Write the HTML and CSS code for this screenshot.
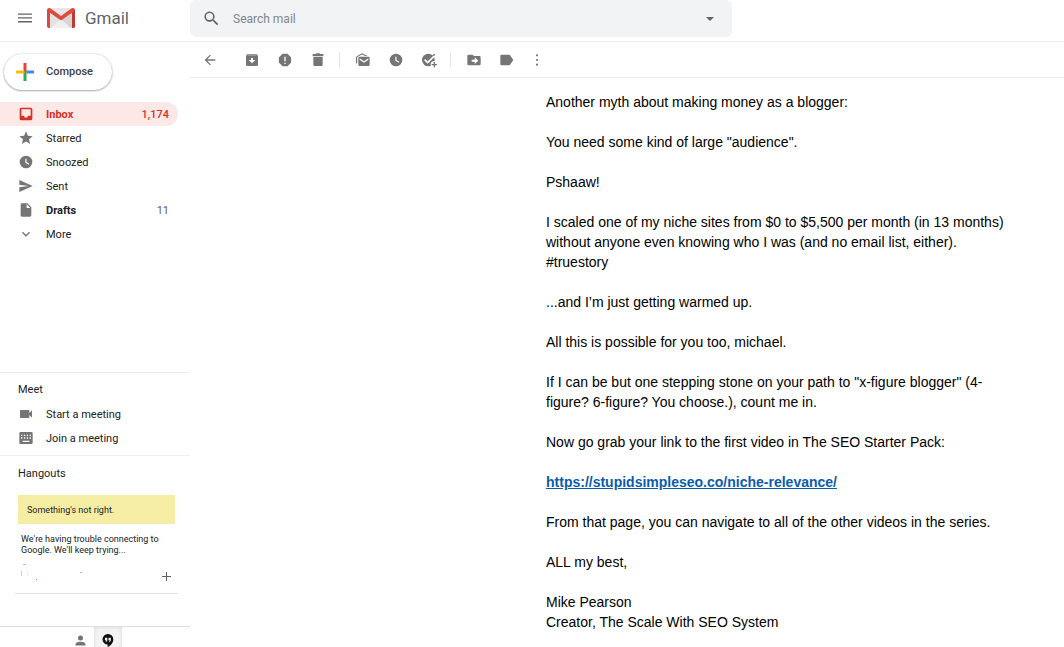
FILE: index.html
```html
<!DOCTYPE html>
<html lang="en">
<head>
<meta charset="utf-8">
<meta name="viewport" content="width=device-width, initial-scale=1">
<title>Gmail</title>
<link rel="stylesheet" href="styles.css">
</head>
<body>
<header class="topbar">
  <div class="brand">
    <button class="icon-btn menu" aria-label="Main menu"><svg width="14" height="10" viewBox="0 0 14 10"><path d="M0 .5h14v1.3H0zM0 4.3h14v1.3H0zM0 8.1h14v1.3H0z"/></svg></button>
    <a class="logo" href="#">
      <svg width="28" height="20" viewBox="0 0 28 20" aria-hidden="true">
        <rect x="1" y="0" width="26" height="20" rx="2" fill="#e2e2e2"/>
        <path d="M4 20 14 11l10 9z" fill="#f0f0f0"/>
        <path d="M14 11 25 3v17h-1z" fill="#d6d6d6"/>
        <path d="M2 0h24L14 9z" fill="#e6e6e6"/>
        <path d="M0 2.200C0 .8 1 0 2 0c.8 0 1.300.2 2 .7L14 8 24 .7c.7-.5 1.200-.7 2-.7 1 0 2 .8 2 2.200V18c0 1.200-.8 2-2 2h-1V4.700L14 12.500 3 4.700V20H2c-1.200 0-2-.8-2-2z" fill="#dc4a3e"/>
        <path d="M25 4.700 28 2.500V18c0 1.200-.8 2-2 2h-1z" fill="#c5372c"/>
      </svg>
      <span>Gmail</span>
    </a>
  </div>
  <form class="search" role="search">
    <button class="icon-btn" type="button" aria-label="Search"><svg width="19" height="19" viewBox="0 0 24 24"><path d="M15.500 14h-.79l-.28-.27A6.470 6.470 0 0 0 16 9.500 6.500 6.500 0 1 0 9.500 16c1.610 0 3.090-.59 4.230-1.570l.27.28v.79l5 4.990L20.490 19zm-6 0a4.500 4.500 0 1 1 0-9 4.500 4.500 0 0 1 0 9z"/></svg></button>
    <input type="text" placeholder="Search mail" aria-label="Search mail">
    <button class="icon-btn" type="button" aria-label="Search options"><svg width="8" height="4" viewBox="0 0 8 4"><path d="M0 0h8L4 4z"/></svg></button>
  </form>
</header>
<div class="layout">
  <aside class="sidebar">
    <button class="compose">
      <svg width="18" height="18" viewBox="0 0 18 18" aria-hidden="true"><path d="M7.500 0h3v9h-3z" fill="#ea4335"/><path d="M0 7.500h7.500L10.500 10.500H0z" fill="#fbbc04"/><path d="M10.500 7.500H18v3h-7.500z" fill="#4285f4"/><path d="M7.500 10.500l3-3V18h-3z" fill="#34a853"/></svg>
      <span>Compose</span>
    </button>
    <nav class="nav">
      <a class="row active" href="#"><svg class="ico" viewBox="0 0 24 24"><path fill-rule="evenodd" d="M19 2.500H5A2.500 2.500 0 0 0 2.500 5v14A2.500 2.500 0 0 0 5 21.500h14a2.500 2.500 0 0 0 2.500-2.500V5A2.500 2.500 0 0 0 19 2.500zM19 14.500h-4a3 3 0 0 1-6 0H5V5h14z"/></svg><span>Inbox</span><span class="count">1,174</span></a>
      <a class="row" href="#"><svg class="ico" viewBox="0 0 24 24"><path d="M12 17.270 18.180 21l-1.640-7.030L22 9.240l-7.190-.61L12 2 9.190 8.630 2 9.240l5.460 4.730L5.820 21z"/></svg><span>Starred</span></a>
      <a class="row" href="#"><svg class="ico" viewBox="0 0 24 24"><path fill-rule="evenodd" d="M12 2.500a9.500 9.500 0 1 0 0 19 9.500 9.500 0 0 0 0-19zM11 7h1.800v5l4.200 2.500-.9 1.600L11 13z"/></svg><span>Snoozed</span></a>
      <a class="row" href="#"><svg class="ico" viewBox="0 0 24 24"><path d="M2 21 22 12 2 3v7l14 2-14 2z"/></svg><span>Sent</span></a>
      <a class="row bold" href="#"><svg class="ico" viewBox="0 0 24 24"><path fill-rule="evenodd" d="M6 2a2 2 0 0 0-2 2v16a2 2 0 0 0 2 2h12a2 2 0 0 0 2-2V8l-6-6zm7 7V3.500L18.500 9z"/></svg><span>Drafts</span><span class="count">11</span></a>
      <a class="row" href="#"><svg class="ico" viewBox="0 0 24 24"><path d="M16.600 8.600 12 13.200 7.400 8.600 6 10l6 6 6-6z"/></svg><span>More</span></a>
    </nav>
    <section class="meet">
      <h2>Meet</h2>
      <a class="row" href="#"><svg class="ico" viewBox="0 0 24 24"><path d="M17 10.500V7a1 1 0 0 0-1-1H4a1 1 0 0 0-1 1v10a1 1 0 0 0 1 1h12a1 1 0 0 0 1-1v-3.500l4 4v-11z"/></svg><span>Start a meeting</span></a>
      <a class="row" href="#"><svg class="ico" viewBox="0 0 24 24"><path fill-rule="evenodd" d="M4 3a2 2 0 0 0-2 2v14a2 2 0 0 0 2 2h16a2 2 0 0 0 2-2V5a2 2 0 0 0-2-2zM4.500 7h2v2h-2zm4.300 0h2v2h-2zm4.300 0h2v2h-2zm4.300 0h2v2h-2zM4.500 11h2v2h-2zm4.300 0h2v2h-2zm4.300 0h2v2h-2zm4.300 0h2v2h-2zM7 16h10v2H7z"/></svg><span>Join a meeting</span></a>
    </section>
    <section class="hangouts">
      <h2>Hangouts</h2>
      <p class="alert">Something's not right.</p>
      <p class="note">We're having trouble connecting to Google. We'll keep trying...</p>
      <div class="account">
        <svg width="70" height="24" viewBox="0 0 70 24" aria-hidden="true"><path d="M3 0h3v1H3z" fill="#a9cbd3"/><path d="M1 7h1v5H1z" fill="#e5c5c3"/><path d="M7 10h1v1H7z" fill="#ccc"/><path d="M16 15h1v1h-1z" fill="#69b26d"/><path d="M60 8h2v1h-2z" fill="#b5b5b5"/></svg>
        <button class="icon-btn" aria-label="New conversation"><svg width="9" height="9" viewBox="0 0 9 9"><path d="M4 0h1v4h4v1H5v4H4V5H0V4h4z"/></svg></button>
      </div>
    </section>
    <footer class="tabs">
      <button class="tab" aria-label="Contacts"><svg width="15" height="15" viewBox="0 0 24 24"><path d="M12 12a4 4 0 1 0 0-8 4 4 0 0 0 0 8zm0 2c-3 0-8 1.300-8 4v2h16v-2c0-2.700-5-4-8-4z"/></svg></button>
      <button class="tab selected" aria-label="Conversations"><svg width="12" height="13" viewBox="0 0 12 13"><path fill-rule="evenodd" d="M6 0a5.300 5.300 0 0 0-.4 10.600V13C9 11.500 11.300 8.500 11.300 5.400A5.300 5.300 0 0 0 6 0zM3 3.800h2.300v2.600L4.500 7.700h-1l.7-1.500H3zm3.500 0h2.300v2.600L8 7.700H7l.7-1.500H6.500z"/></svg></button>
    </footer>
  </aside>
  <main class="content">
    <div class="toolbar">
      <button class="tool back" aria-label="Back"><svg class="ico" viewBox="0 0 24 24"><path d="M20 11H7.800l5.600-5.600L12 4l-8 8 8 8 1.400-1.400L7.800 13H20z"/></svg></button>
      <button class="tool" aria-label="Archive"><svg class="ico" viewBox="0 0 24 24"><path fill-rule="evenodd" d="M20.500 5.200 19.200 3.500A1.400 1.400 0 0 0 18 3H6c-.5 0-.9.200-1.200.500L3.500 5.200C3.200 5.600 3 6 3 6.500V19a2 2 0 0 0 2 2h14a2 2 0 0 0 2-2V6.500c0-.5-.2-.9-.5-1.300zM5.100 5l.8-1h12l.9 1zM10.500 9h3v3H17l-5 5-5-5h3.500z"/></svg></button>
      <button class="tool" aria-label="Report spam"><svg class="ico" viewBox="0 0 24 24"><path fill-rule="evenodd" d="M8.200 2.800 2.800 8.200v7.600l5.400 5.400h7.600l5.400-5.400V8.200l-5.400-5.400zM11 7h2v7h-2zm0 9h2v2h-2z"/></svg></button>
      <button class="tool" aria-label="Delete"><svg class="ico" viewBox="0 0 24 24"><path d="M5 19a2 2 0 0 0 2 2h10a2 2 0 0 0 2-2V7H5zM20 3h-4.500l-1-1h-5l-1 1H4v3h16z"/></svg></button>
      <span class="sep"></span>
      <button class="tool" aria-label="Mark as unread"><svg class="ico" viewBox="0 0 24 24"><path fill-rule="evenodd" d="M7 7a2 2 0 0 0-2 2v10a2 2 0 0 0 2 2h13a2 2 0 0 0 2-2V9a2 2 0 0 0-2-2zm0 2.500 6.500 4.500L20 9.500v2L13.500 16 7 11.500z"/><path d="M1.500 17V8c0-.8.4-1.400 1-1.700L10.500 2l8.500 4h-3.500l-5-2.200L3.300 7.500V17z"/></svg></button>
      <button class="tool" aria-label="Snooze"><svg class="ico" viewBox="0 0 24 24"><path fill-rule="evenodd" d="M12 2.500a9.500 9.500 0 1 0 0 19 9.500 9.500 0 0 0 0-19zM11 7h1.800v5l4.200 2.500-.9 1.600L11 13z"/></svg></button>
      <button class="tool" aria-label="Add to Tasks"><svg class="ico" viewBox="0 0 24 24"><circle cx="11" cy="12" r="9.500"/><path d="m5.500 11.500 4.500 4.500L22 4" fill="none" stroke="#fff" stroke-width="2.400"/><path d="M17.500 5 20 2.500 21.500 4 19 6.500z"/><circle cx="20" cy="19" r="5.500" fill="#fff"/><path d="M19 15h2v3h3v2h-3v3h-2v-3h-3v-2h3z"/></svg></button>
      <span class="sep"></span>
      <button class="tool" aria-label="Move to"><svg class="ico" viewBox="0 0 24 24"><path fill-rule="evenodd" d="M20 6h-8l-2-2H4a2 2 0 0 0-2 2v12a2 2 0 0 0 2 2h16a2 2 0 0 0 2-2V8a2 2 0 0 0-2-2zm-7 12v-3.500H8.500v-3H13V8l5.500 5z"/></svg></button>
      <button class="tool" aria-label="Labels"><svg class="ico" viewBox="0 0 24 24"><path d="M16.600 4.800C16.200 4.300 15.600 4 15 4H4a2 2 0 0 0-2 2v12a2 2 0 0 0 2 2h11c.6 0 1.200-.3 1.600-.8L21.500 12z"/></svg></button>
      <button class="tool more" aria-label="More"><svg class="ico" viewBox="0 0 24 24"><circle cx="12" cy="5" r="1.600"/><circle cx="12" cy="12" r="1.600"/><circle cx="12" cy="19" r="1.600"/></svg></button>
    </div>
    <article class="mail">
      <p>Another myth about making money as a blogger:</p>
      <p>You need some kind of large "audience".</p>
      <p>Pshaaw!</p>
      <p>I scaled one of my niche sites from $0 to $5,500 per month (in 13 months) without anyone even knowing who I was (and no email list, either). #truestory</p>
      <p>...and I’m just getting warmed up.</p>
      <p>All this is possible for you too, michael.</p>
      <p>If I can be but one stepping stone on your path to "x-figure blogger" (4-figure? 6-figure? You choose.), count me in.</p>
      <p>Now go grab your link to the first video in The SEO Starter Pack:</p>
      <p><a href="#">https://stupidsimpleseo.co/niche-relevance/</a></p>
      <p>From that page, you can navigate to all of the other videos in the series.</p>
      <p>ALL my best,</p>
      <p>Mike Pearson<br>Creator, The Scale With SEO System</p>
    </article>
  </main>
</div>
</body>
</html>
```
FILE: styles.css
```css
* { box-sizing: border-box; }
body {
  margin: 0;
  min-height: 100vh;
  display: flex;
  flex-direction: column;
  background: #fff;
  color: #202124;
  font: 11px/16px Roboto, "Liberation Sans", sans-serif;
}
button {
  border: 0;
  padding: 0;
  background: none;
  font: inherit;
  color: inherit;
  display: flex;
  align-items: center;
  justify-content: center;
}
a { color: inherit; text-decoration: none; }
p, h2 { margin: 0; }
svg { display: block; flex: none; fill: currentColor; }
.ico { width: 16px; height: 16px; color: #757575; }

.topbar {
  display: flex;
  align-items: flex-start;
  height: 42px;
  border-bottom: 1px solid #eeeeee;
}
.brand {
  display: flex;
  align-items: center;
  width: 190px;
  height: 36px;
  padding-left: 18px;
  color: #5f6368;
}
.logo {
  display: flex;
  align-items: center;
  gap: 10px;
  margin-left: 15px;
  font-size: 17px;
  line-height: 20px;
}
.search {
  display: flex;
  align-items: center;
  flex: 0 1 542px;
  height: 37px;
  padding: 0 18px 0 12px;
  border-radius: 6px;
  background: #f1f3f4;
  color: #5f6368;
}
.search input {
  flex: 1;
  min-width: 0;
  margin-left: 12px;
  padding: 0;
  border: 0;
  background: none;
  font: 12px/16px Roboto, "Liberation Sans", sans-serif;
}
.search input::placeholder { color: #80868b; opacity: 1; }

.layout { display: flex; flex: 1; }
.sidebar {
  display: flex;
  flex-direction: column;
  flex: none;
  width: 190px;
}
.compose {
  align-self: flex-start;
  gap: 12px;
  height: 36px;
  margin: 12px 0 12px 4px;
  padding: 0 19px 0 12px;
  border-radius: 18px;
  box-shadow: 0 1px 2px rgba(60, 64, 67, .4), 0 0 2px rgba(60, 64, 67, .25);
  color: #3c4043;
  font-weight: 500;
}
.nav { flex: 1; }
.row {
  display: flex;
  align-items: center;
  gap: 12px;
  width: 178px;
  height: 24px;
  padding: 0 9px 0 18px;
  border-radius: 0 12px 12px 0;
}
.row span { padding-top: 2px; }
.row.active { background: #fce8e6; color: #d93025; font-weight: 700; }
.row.active .ico { color: #d93025; }
.row.bold { font-weight: 700; }
.count { margin-left: auto; }
.active .count { font-weight: 500; }
.bold .count { color: #5f6368; font-weight: 400; }
.meet, .hangouts { border-top: 1px solid #eeeeee; }
.meet { height: 83px; padding-top: 9px; }
.meet h2, .hangouts h2 {
  padding-left: 18px;
  font-size: 11px;
  font-weight: 400;
}
.meet h2 { margin-bottom: 4px; }
.hangouts { height: 171px; padding-top: 10px; }
.alert {
  margin: 13px 15px 0 18px;
  padding: 7px 9px 6px;
  background: #f6eda5;
  font-size: 9px;
}
.note {
  margin: 10px 20px 0 21px;
  font-size: 9px;
  line-height: 11px;
}
.account {
  display: flex;
  justify-content: space-between;
  align-items: center;
  margin: 8px 12px 0 15px;
  padding: 0 7px 5px 5px;
  border-bottom: 1px solid #e0e0e0;
  color: #616161;
}
.tabs {
  display: flex;
  justify-content: center;
  height: 21px;
  padding-right: 2px;
  border-top: 1px solid #dddddd;
  overflow: hidden;
}
.tab { width: 28px; height: 26px; color: #757575; }
.tab.selected {
  background: #f4f4f4;
  box-shadow: inset 0 0 4px rgba(0, 0, 0, .12);
  color: #111;
}

.content { flex: 1; min-width: 0; }
.toolbar {
  display: flex;
  align-items: center;
  height: 36px;
  padding-left: 3px;
  border-bottom: 1px solid #eeeeee;
}
.tool { width: 33px; height: 33px; }
.tool.back { margin-right: 9px; }
.tool.more { width: 27px; }
.sep {
  width: 1px;
  height: 15px;
  margin: 0 6px 0 5px;
  background: #e6e6e6;
}
.mail {
  display: flex;
  flex-direction: column;
  gap: 20px;
  max-width: 465px;
  margin: 14px 0 15px 356px;
  color: #000;
  font: 14px/20px "Liberation Sans", Arial, sans-serif;
}
.mail a { color: #0b5cab; font-weight: 700; text-decoration: underline; }
```
